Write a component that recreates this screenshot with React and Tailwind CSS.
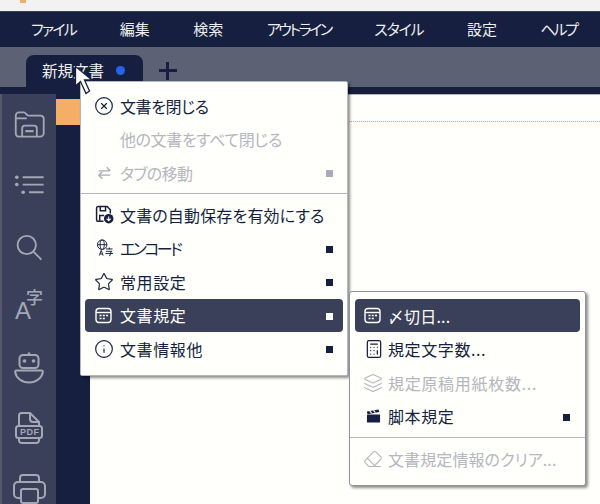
import React from 'react';
import { CircleX, Star, Info, Calculator, Layers, Eraser } from 'lucide-react';

const font = "font-['Noto_Sans_CJK_JP','Noto_Sans',sans-serif] [font-feature-settings:'palt']";

function Square({ className }) {
  return <span className={`absolute w-[7px] h-[7px] ${className}`} />;
}

function CalendarIcon() {
  return (
    <svg width="17" height="17" viewBox="0 0 17 17" fill="none" stroke="currentColor" strokeWidth="1.4">
      <rect x="1" y="1.5" width="15" height="14" rx="3" />
      <path d="M1 5.5h15" />
      <path d="M4.5 8.5h2M7.8 8.5h2M11 8.5h2M4.5 11.5h2M7.8 11.5h2" strokeWidth="1.6" />
    </svg>
  );
}

function SaveIcon() {
  return (
    <svg width="19" height="19" viewBox="0 0 18 18" fill="none" stroke="#161f3f" strokeWidth="1.4">
      <path d="M8 15.5H3a1.5 1.5 0 0 1-1.5-1.5V3A1.5 1.5 0 0 1 3 1.5h8.5l3 3V8" />
      <path d="M5 1.5v4h5v-4M4.5 15v-5h4" />
      <circle cx="13" cy="13" r="4.5" fill="#161f3f" stroke="none" />
      <path d="M11 13l2 2 2-2M13 15v-4" stroke="#fffffb" strokeWidth="1" />
    </svg>
  );
}

function GlobeTextIcon() {
  return (
    <svg className="ml-[1px]" width="18" height="18" viewBox="0 0 19 19" fill="none" stroke="#161f3f" strokeWidth="1">
      <circle cx="6.5" cy="6" r="5" />
      <ellipse cx="6.5" cy="6" rx="2.2" ry="5" />
      <path d="M1.5 6h10" />
      <path d="M3.5 17.5l2-5.5 2 5.5M4.2 15.8h2.6" />
      <path d="M10.5 10.5h7M14 9v2M10.5 13h6.5l-2 1.6v2.6l-1.2.6M10 15.3h8" />
    </svg>
  );
}

function ClapperIcon() {
  return (
    <svg className="ml-[2px]" width="15" height="16" viewBox="0 0 16 16" fill="#161f3f">
      <rect x="1" y="6.5" width="14" height="8.5" rx="0.5" />
      <path d="M1 3.2L13.5 1l.6 2.6L1.5 6z" />
      <path d="M4 2.7l2 2.3M8 2l2 2.3" stroke="#fffffb" strokeWidth="1.2" />
    </svg>
  );
}

function SwapIcon() {
  return (
    <svg className="ml-[2px]" width="15" height="16" viewBox="0 0 17 17" fill="none" stroke="#a9acb8" strokeWidth="1.5">
      <path d="M2 6h13M11 2l4 4" />
      <path d="M15 11H2M6 7l-4 4 4 4" />
    </svg>
  );
}

function FolderIcon() {
  return (
    <svg width="33" height="29" viewBox="0 0 34 30" fill="none" stroke="#a4a7b4" strokeWidth="2">
      <path d="M2 8V5a3.5 3.5 0 0 1 3.5-3.5H11c2 0 2.5 3.5 5 3.5h13A3.5 3.5 0 0 1 32.5 8.5V24a4 4 0 0 1-4 4H5.5A3.5 3.5 0 0 1 2 24.5V8z" />
      <path d="M2 8h12" />
      <path d="M9 28V19a3 3 0 0 1 3-3h10a3 3 0 0 1 3 3v9" />
      <path d="M12.5 22h9" strokeWidth="2.4" />
    </svg>
  );
}

function ListIcon() {
  return (
    <svg width="33" height="20" viewBox="0 0 33 22" fill="#a4a7b4">
      <circle cx="2.5" cy="2.5" r="2" />
      <circle cx="2.5" cy="10.5" r="2" />
      <circle cx="9.5" cy="19" r="2" />
      <path d="M9 2.5h23M9 10.5h23M16 19h16" stroke="#a4a7b4" strokeWidth="2" />
    </svg>
  );
}

function FontIcon() {
  return (
    <div className="relative w-[28px] h-[32px] text-[#a4a7b4]">
      <span className="absolute left-0 bottom-[4px] text-[24px] leading-[14px] font-['Liberation_Sans',sans-serif]">A</span>
      <span className={`absolute right-0 top-[2px] text-[17px] leading-[10px] font-medium ${font}`}>字</span>
    </div>
  );
}

function RobotIcon() {
  return (
    <svg width="30" height="33" viewBox="0 0 30 33" fill="none" stroke="#a4a7b4" strokeWidth="2">
      <rect x="5.5" y="4" width="19" height="13" rx="3.5" />
      <path d="M15 4V1.5" strokeWidth="2.4" />
      <circle cx="10.5" cy="10" r="1.8" fill="#a4a7b4" stroke="none" />
      <circle cx="19.5" cy="10" r="1.8" fill="#a4a7b4" stroke="none" />
      <path d="M2.5 19.5h25c1 0 1.5.5 1.3 1.7C28 27 22 31.5 15 31.5S2 27 1.2 21.2C1 20 1.5 19.5 2.5 19.5z" />
    </svg>
  );
}

function PdfIcon() {
  return (
    <div className="relative w-[28px] h-[32px]">
      <svg width="28" height="32" viewBox="0 0 28 32" fill="none" stroke="#a4a7b4" strokeWidth="2">
        <path d="M4 14V3.5A2.5 2.5 0 0 1 6.5 1H15l9 9v4" />
        <path d="M15 1v6a3 3 0 0 0 3 3h6" />
        <rect x="1" y="14" width="26" height="12" rx="2.5" />
        <path d="M4 26v2.5A2.5 2.5 0 0 0 6.5 31h15a2.5 2.5 0 0 0 2.5-2.5V26" />
      </svg>
      <span className="absolute left-[5px] top-[15px] text-[9px] leading-[10px] font-bold tracking-[0.5px] text-[#a4a7b4] font-['Liberation_Sans',sans-serif]">PDF</span>
    </div>
  );
}

function PrinterIcon() {
  return (
    <svg width="33" height="30" viewBox="0 0 33 30" fill="none" stroke="#a4a7b4" strokeWidth="2">
      <path d="M7 8V4a3 3 0 0 1 3-3h13a3 3 0 0 1 3 3v4" />
      <path d="M8 24H5a4 4 0 0 1-4-4v-8a4 4 0 0 1 4-4h23a4 4 0 0 1 4 4v8a4 4 0 0 1-4 4h-3" />
      <rect x="8" y="15" width="17" height="14" rx="2" />
    </svg>
  );
}

function MenuRow({ icon, label, disabled, active, arrow, sub, track = 'tracking-[0.6px]' }) {
  let color = 'text-[#161f3f]';
  if (disabled) color = 'text-[#b4b6c0]';
  if (active) color = 'text-[#fffffb] bg-[#3a405a]';
  let sq = disabled ? 'bg-[#a9acb8]' : 'bg-[#161f3f]';
  if (active) sq = 'bg-[#fffffb]';
  return (
    <div className={`relative flex items-center h-[33px] mb-[0.5px] rounded-[4px] text-[16px] leading-none ${track} ${color}`}>
      <span className={`shrink-0 flex items-center ${sub ? 'w-[33px] pl-[9px]' : 'w-[35px] pl-[10px]'}`}>{icon}</span>
      <span className="whitespace-nowrap">{label}</span>
      {arrow && <Square className={`right-[10px] top-[14px] ${sq}`} />}
    </div>
  );
}

export default function App() {
  const menus = [
    { label: 'ファイル', cls: 'tracking-[-1.7px]' },
    { label: '編集', cls: '' },
    { label: '検索', cls: '' },
    { label: 'アウトライン', cls: 'tracking-[-2.4px]' },
    { label: 'スタイル', cls: 'tracking-[-1.2px]' },
    { label: '設定', cls: '' },
    { label: 'ヘルプ', cls: 'tracking-[-2.2px]' },
  ];

  return (
    <div className={`relative w-[600px] h-[504px] overflow-hidden flex flex-col bg-[#fffffb] ${font}`}>
      {/* title bar */}
      <div className="relative h-[12px] shrink-0 bg-[#f2f2f2] border-b border-[#3a405a]">
        <span className="absolute left-[20px] top-0 w-[6px] h-[3px] bg-[#f4ae68]" />
      </div>

      {/* menu bar */}
      <div className="h-[35px] shrink-0 bg-[#161f3f] flex items-center gap-[43.5px] pl-[31px] text-[15px] text-[#eceef0]">
        {menus.map((m) => (
          <span key={m.label} className={`whitespace-nowrap ${m.cls}`}>{m.label}</span>
        ))}
      </div>

      {/* tab bar */}
      <div className="h-[40px] shrink-0 bg-[#5c6274] flex items-end pl-[26px]">
        <div className="h-[32px] w-[117px] rounded-t-[8px] bg-[#161f3f] flex items-center pl-[16px] pb-[1px] text-[15.5px] text-[#eceef0] leading-none">
          新規文書
          <span className="ml-[12px] w-[9px] h-[9px] rounded-full bg-[#2563eb]" />
        </div>
        <span className="self-center ml-[16px] mt-[7px] w-[18px] h-[18px] relative">
          <span className="absolute left-0 top-[7px] w-[18px] h-[3px] bg-[#161f3f]" />
          <span className="absolute left-[7px] top-0 w-[3px] h-[18px] bg-[#161f3f]" />
        </span>
      </div>

      {/* body */}
      <div className="flex-1 min-h-0 flex bg-[#161f3f] pt-[7px]">
        <div className="w-[56px] shrink-0 bg-[#3a405a] border-l-2 border-l-[#55596a] flex flex-col items-center pt-[17px]">
          <FolderIcon />
          <div className="mt-[36px]"><ListIcon /></div>
          <svg className="mt-[39px]" width="29" height="29" viewBox="0 0 30 30" fill="none" stroke="#a4a7b4" strokeWidth="2"><circle cx="12" cy="12" r="10" /><path d="M19 19l9 9" /></svg>
          <div className="mt-[29px]"><FontIcon /></div>
          <div className="mt-[29px]"><RobotIcon /></div>
          <div className="mt-[28px]"><PdfIcon /></div>
          <div className="mt-[30px]"><PrinterIcon /></div>
        </div>
        <div className="w-[34px] shrink-0 pt-[5px]">
          <div className="w-[24px] h-[26px] bg-[#f4ae68]" />
        </div>
        <div className="flex-1 bg-[#fffffb] border-t border-[#b4b6c0] pt-[26px]">
          <div className="border-t border-dotted border-[#f0a050]" />
        </div>
      </div>

      {/* context menu */}
      <div className="absolute left-[80px] top-[81px] w-[268px] h-[295px] bg-[#fffffb] border border-[#b4b6c0] rounded-[2px] shadow-[2px_2px_3px_rgba(0,0,0,0.45)] px-[4px] pt-[7px]">
        <MenuRow icon={<CircleX size={20} strokeWidth={1.4} className="-ml-[1px]" />} label="文書を閉じる" track="tracking-[-0.4px]" />
        <MenuRow label="他の文書をすべて閉じる" disabled track="tracking-[-0.4px]" />
        <MenuRow icon={<SwapIcon />} label="タブの移動" disabled arrow track="tracking-[-0.6px]" />
        <div className="h-px bg-[#b4b6c0] mt-[3.5px] mb-[4.5px] -mx-[4px]" />
        <MenuRow icon={<SaveIcon />} label="文書の自動保存を有効にする" track="tracking-[0.15px]" />
        <MenuRow icon={<GlobeTextIcon />} label="エンコード" arrow track="tracking-[-2.6px]" />
        <MenuRow icon={<Star size={20} strokeWidth={1.4} className="-ml-[1px]" />} label="常用設定" arrow />
        <MenuRow icon={<CalendarIcon />} label="文書規定" active arrow />
        <MenuRow icon={<Info size={20} strokeWidth={1.4} className="-ml-[1px]" />} label="文書情報他" arrow />
      </div>

      {/* sub menu */}
      <div className="absolute left-[349px] top-[291px] w-[237px] h-[195px] bg-[#fffffb] border border-[#8f92a1] rounded-[3px] shadow-[2px_2px_3px_rgba(0,0,0,0.45)] px-[5px] pt-[7px]">
        <MenuRow icon={<CalendarIcon />} label="〆切日..." active sub track="tracking-[0.2px]" />
        <MenuRow icon={<Calculator size={20} strokeWidth={1.5} />} label="規定文字数..." sub />
        <MenuRow icon={<Layers size={20} strokeWidth={1.3} className="-ml-[1px]" />} label="規定原稿用紙枚数..." disabled sub track="tracking-[0.7px]" />
        <MenuRow icon={<ClapperIcon />} label="脚本規定" arrow sub />
        <div className="h-px bg-[#b4b6c0] mt-[4px] mb-[4.5px] -mx-[5px]" />
        <MenuRow icon={<Eraser size={20} strokeWidth={1.3} className="-ml-[1px]" />} label="文書規定情報のクリア..." disabled sub track="tracking-[0.1px]" />
      </div>

      {/* mouse cursor */}
      <svg className="absolute left-[74px] top-[65px]" width="20" height="32" viewBox="0 0 20 32">
        <path d="M1.5 1.5V21l5-4.5L12 28.5l3.5-2.5L10.5 15H18z" fill="#fff" stroke="#161f3f" strokeWidth="1.3" />
      </svg>
    </div>
  );
}
